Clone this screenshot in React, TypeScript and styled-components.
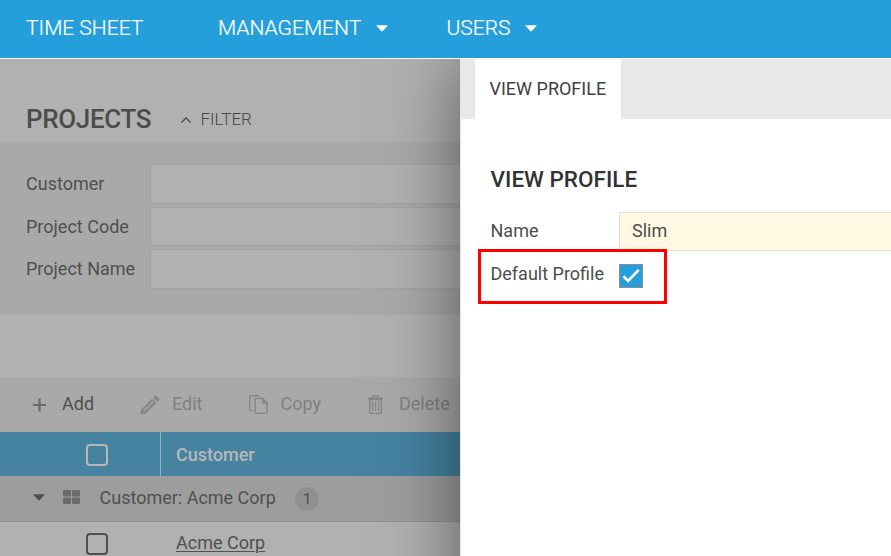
import React from 'react';
import styled, { createGlobalStyle } from 'styled-components';

const GlobalStyle = createGlobalStyle`
  * { box-sizing: border-box; }
  body { margin: 0; overflow: hidden; font-family: Roboto, sans-serif; background: #fff; }
`;

const Page = styled.div`
  width: 891px;
  height: 556px;
  display: flex;
  flex-direction: column;
  overflow: hidden;
`;

const NavBar = styled.nav`
  position: relative;
  z-index: 2;
  flex: none;
  height: 59px;
  display: flex;
  align-items: center;
  padding: 0 0 2px 26px;
  background: #259fdc;
  border-bottom: 1px solid #fff;
`;

const NavItem = styled.div<{ $width: number }>`
  flex: none;
  width: ${(p) => p.$width}px;
  display: flex;
  align-items: center;
  gap: 14.5px;
  color: #fff;
  font-size: 21px;
  font-weight: 300;
  line-height: 26px;
  white-space: nowrap;
  -webkit-text-stroke: 0.2px currentColor;
`;

const Body = styled.div`
  flex: 1;
  display: flex;
  min-height: 0;
`;

const Projects = styled.main`
  flex: none;
  width: 460px;
  background: #b1b1b1;
  color: #505050;
  overflow: hidden;
`;

const TitleRow = styled.div`
  height: 83px;
  display: flex;
  align-items: flex-end;
  padding: 0 0 7px 26px;
`;

const PageTitle = styled.h1`
  width: 154px;
  margin: 0;
  font-size: 26px;
  font-weight: 500;
  line-height: 31px;
  letter-spacing: -0.35px;
  color: #4c4c4c;
`;

const FilterToggle = styled.div`
  display: flex;
  align-items: center;
  gap: 8.5px;
  height: 31px;
  padding-bottom: 2px;
  font-size: 17px;
  font-weight: 300;
  color: #484848;
  svg { margin-top: 2px; }
`;

const FilterPanel = styled.section`
  height: 173px;
  padding: 22px 0 0 26px;
  background: #a9a9a9;
  display: flex;
  flex-direction: column;
  gap: 3px;
`;

const FilterRow = styled.div<{ $height: number }>`
  flex: none;
  height: ${(p) => p.$height}px;
  display: flex;
  align-items: center;
`;

const FilterLabel = styled.label`
  flex: none;
  width: 124px;
  font-size: 18px;
  line-height: 22px;
`;

const FilterField = styled.div`
  flex: 1;
  height: 100%;
  background: #b1b1b1;
  border: 1px solid #a3a3a3;
  border-right: 0;
`;

const Toolbar = styled.div`
  height: 55px;
  margin-top: 62px;
  padding: 0 0 1px 32px;
  display: flex;
  align-items: center;
  background: #a9a9a9;
`;

const ToolButton = styled.div<{ $width: number; $gap: number; $disabled?: boolean }>`
  flex: none;
  width: ${(p) => p.$width}px;
  display: flex;
  align-items: center;
  gap: ${(p) => p.$gap}px;
  font-size: 18px;
  line-height: 22px;
  color: ${(p) => (p.$disabled ? '#808080' : '#505050')};
  svg { flex: none; margin-top: 1px; color: ${(p) => (p.$disabled ? '#888' : '#6a6a6a')}; }
`;

const HeaderRow = styled.div`
  height: 44px;
  display: flex;
  background: #4583a1;
  color: #b8b8b8;
`;

const CheckCell = styled.div<{ $ruled?: boolean }>`
  width: 161px;
  display: flex;
  align-items: center;
  padding: 2px 0 0 86px;
  border-right: 1px solid ${(p) => (p.$ruled ? '#9ab0ba' : 'transparent')};
`;

const CheckBox = styled.span`
  width: 22px;
  height: 22px;
  border: 2px solid currentColor;
  border-radius: 4px;
`;

const Cell = styled.div<{ $bold?: boolean; $link?: boolean }>`
  padding-left: 15px;
  display: flex;
  align-items: center;
  font-size: 18px;
  font-weight: ${(p) => (p.$bold ? 500 : 400)};
  text-decoration: ${(p) => (p.$link ? 'underline' : 'none')};
  text-decoration-thickness: 1px;
  text-underline-offset: 2px;
`;

const GroupRow = styled.div`
  height: 46px;
  display: flex;
  align-items: center;
  padding: 0 0 2px 33px;
  background: #9d9d9d;
  border-bottom: 1px solid #929292;
  font-size: 18px;
`;

const GroupIcon = styled.svg`
  margin: 0 19.5px 1px 18px;
`;

const Count = styled.span`
  width: 24px;
  height: 24px;
  margin: 2px 0 0 19.5px;
  border-radius: 12px;
  background: #909090;
  font-size: 15px;
  line-height: 24px;
  text-align: center;
`;

const DataRow = styled.div`
  height: 41px;
  display: flex;
`;

/* Runs past the bottom of the page so its shadow stays even down to the edge. */
const Drawer = styled.aside`
  position: relative;
  z-index: 1;
  flex: 1;
  margin-bottom: -100px;
  background: #fff;
  border-left: 1px solid #e5e5e5;
  box-shadow: 0 0 70px rgba(0, 0, 0, 0.5);
  color: #4d4d4d;
`;

const TabStrip = styled.div`
  height: 60px;
  padding-left: 14px;
  background: #e8e8e8;
`;

const Tab = styled.div`
  width: 146px;
  height: 60px;
  padding-left: 14.5px;
  background: #fff;
  color: #404040;
  font-size: 18px;
  line-height: 60px;
  white-space: nowrap;
`;

const DrawerTitle = styled.h2`
  margin: 46px 0 19px 29.5px;
  font-size: 22.5px;
  font-weight: 500;
  line-height: 28px;
  color: #333;
`;

const FormRow = styled.div`
  height: 39px;
  padding-left: 29.5px;
  display: flex;
  font-size: 18px;
  line-height: 38px;
`;

const FormLabel = styled.label`
  flex: none;
  width: 128.5px;
  white-space: nowrap;
`;

const NameField = styled.div`
  flex: 1;
  height: 39px;
  padding-left: 12px;
  background: #fff9e4;
  border: 1px solid #e3e1cd;
  border-right: 0;
  line-height: 36px;
`;

const Highlight = styled.div`
  width: 189px;
  height: 55px;
  margin: -2px 0 0 17px;
  position: relative;
  border: 3px solid #f00;
  padding: 0 0 0 9.5px;
  display: flex;
  font-size: 18px;
  line-height: 43px;
`;

const CheckedBox = styled.span`
  width: 24px;
  height: 24px;
  margin-top: 12px;
  background: #259fdc;
  border: 1px solid #8d8d8d;
  display: flex;
`;

const CaretShape = styled.svg<{ $drop?: number }>`
  flex: none;
  margin-top: ${(p) => p.$drop ?? 0}px;
`;

const Caret = ({ drop }: { drop?: number }) => (
  <CaretShape $drop={drop} width="12" height="7" viewBox="0 0 12 7" fill="currentColor">
    <path d="M1 .3H11Q12 .3 11.4 1.1L6.8 6.1Q6 6.9 5.2 6.1L.6 1.1Q0 .3 1 .3Z" />
  </CaretShape>
);

const PlusIcon = () => (
  <svg width="14" height="14" viewBox="0 0 14 14" stroke="currentColor" strokeWidth="2.2">
    <path d="M7.5 .5V13.5M1 7H14" />
  </svg>
);

const PencilIcon = () => (
  <svg width="20" height="20" viewBox="0 0 20 20" fill="currentColor">
    <path d="M.5 19.5L1 14.6L12 3.6L16.4 8L5.4 19Z" />
    <path d="M13 2.6L14.9 .8Q15.7 0 16.6 .8L19.2 3.4Q20 4.3 19.2 5.1L17.4 7Z" />
    <path d="M4 15.8L13.4 6.4" fill="none" stroke="#a9a9a9" strokeWidth="1.3" />
  </svg>
);

const CopyIcon = () => (
  <svg width="19" height="19" viewBox="0 0 19 19" fill="none" stroke="currentColor" strokeWidth="1.4">
    <path d="M4.2 15.6H.7V1.4Q.7 .7 1.4 .7H10.5M6.2 3.4H13.6L18.2 8V17.6Q18.2 18.3 17.5 18.3H6.9Q6.2 18.3 6.2 17.6Z" />
    <path d="M13.5 3.4V8H18.2Z" fill="currentColor" />
  </svg>
);

const TrashIcon = () => (
  <svg width="15" height="19" viewBox="0 0 15 19" fill="none" stroke="currentColor">
    <path d="M4.7 2.8V1.5Q4.7 .8 5.4 .8H9.6Q10.3 .8 10.3 1.5V2.8" strokeWidth="1.4" />
    <path d="M.3 3.7H14.7" strokeWidth="2.8" />
    <path d="M1.7 5V17.4Q1.7 18.2 2.5 18.2H12.5Q13.3 18.2 13.3 17.4V5" strokeWidth="1.5" />
    <path d="M4.5 6V16M7.5 6V16M10.5 6V16" strokeWidth="1.3" />
  </svg>
);

const filters = [
  { label: 'Customer', height: 40 },
  { label: 'Project Code', height: 39 },
  { label: 'Project Name', height: 40 },
];

export default function App() {
  return (
    <Page>
      <GlobalStyle />
      <NavBar>
        <NavItem $width={192}>TIME SHEET</NavItem>
        <NavItem $width={228.5}>MANAGEMENT<Caret drop={1} /></NavItem>
        <NavItem $width={120}>USERS<Caret drop={1} /></NavItem>
      </NavBar>
      <Body>
        <Projects>
          <TitleRow>
            <PageTitle>PROJECTS</PageTitle>
            <FilterToggle>
              <svg width="12" height="8" viewBox="0 0 12 8" fill="none" stroke="currentColor" strokeWidth="1.3">
                <path d="M1.5 6.5L6 2L10.5 6.5" />
              </svg>
              FILTER
            </FilterToggle>
          </TitleRow>
          <FilterPanel>
            {filters.map((f) => (
              <FilterRow key={f.label} $height={f.height}>
                <FilterLabel>{f.label}</FilterLabel>
                <FilterField />
              </FilterRow>
            ))}
          </FilterPanel>
          <Toolbar>
            <ToolButton $width={108} $gap={16}><PlusIcon />Add</ToolButton>
            <ToolButton $width={108.5} $gap={12} $disabled><PencilIcon />Edit</ToolButton>
            <ToolButton $width={119.5} $gap={13} $disabled><CopyIcon />Copy</ToolButton>
            <ToolButton $width={90} $gap={16} $disabled><TrashIcon />Delete</ToolButton>
          </Toolbar>
          <HeaderRow>
            <CheckCell $ruled><CheckBox /></CheckCell>
            <Cell $bold>Customer</Cell>
          </HeaderRow>
          <GroupRow>
            <Caret />
            <GroupIcon width="17" height="14" viewBox="0 0 17 14" fill="#6b6b6b">
              <rect width="8" height="6.5" rx="1" />
              <rect x="9" width="8" height="6.5" rx="1" />
              <rect y="7.5" width="8" height="6.5" rx="1" />
              <rect x="9" y="7.5" width="8" height="6.5" rx="1" />
            </GroupIcon>
            Customer: Acme Corp
            <Count>1</Count>
          </GroupRow>
          <DataRow>
            <CheckCell><CheckBox /></CheckCell>
            <Cell $link>Acme Corp</Cell>
          </DataRow>
        </Projects>
        <Drawer>
          <TabStrip><Tab>VIEW PROFILE</Tab></TabStrip>
          <DrawerTitle>VIEW PROFILE</DrawerTitle>
          <FormRow>
            <FormLabel>Name</FormLabel>
            <NameField>Slim</NameField>
          </FormRow>
          <Highlight>
            <FormLabel>Default Profile</FormLabel>
            <CheckedBox>
              <svg width="22" height="22" viewBox="0 0 22 22" fill="none" stroke="#fff" strokeWidth="2.6">
                <path d="M3.3 11.3L8.2 16L18.7 4.8" />
              </svg>
            </CheckedBox>
          </Highlight>
        </Drawer>
      </Body>
    </Page>
  );
}
